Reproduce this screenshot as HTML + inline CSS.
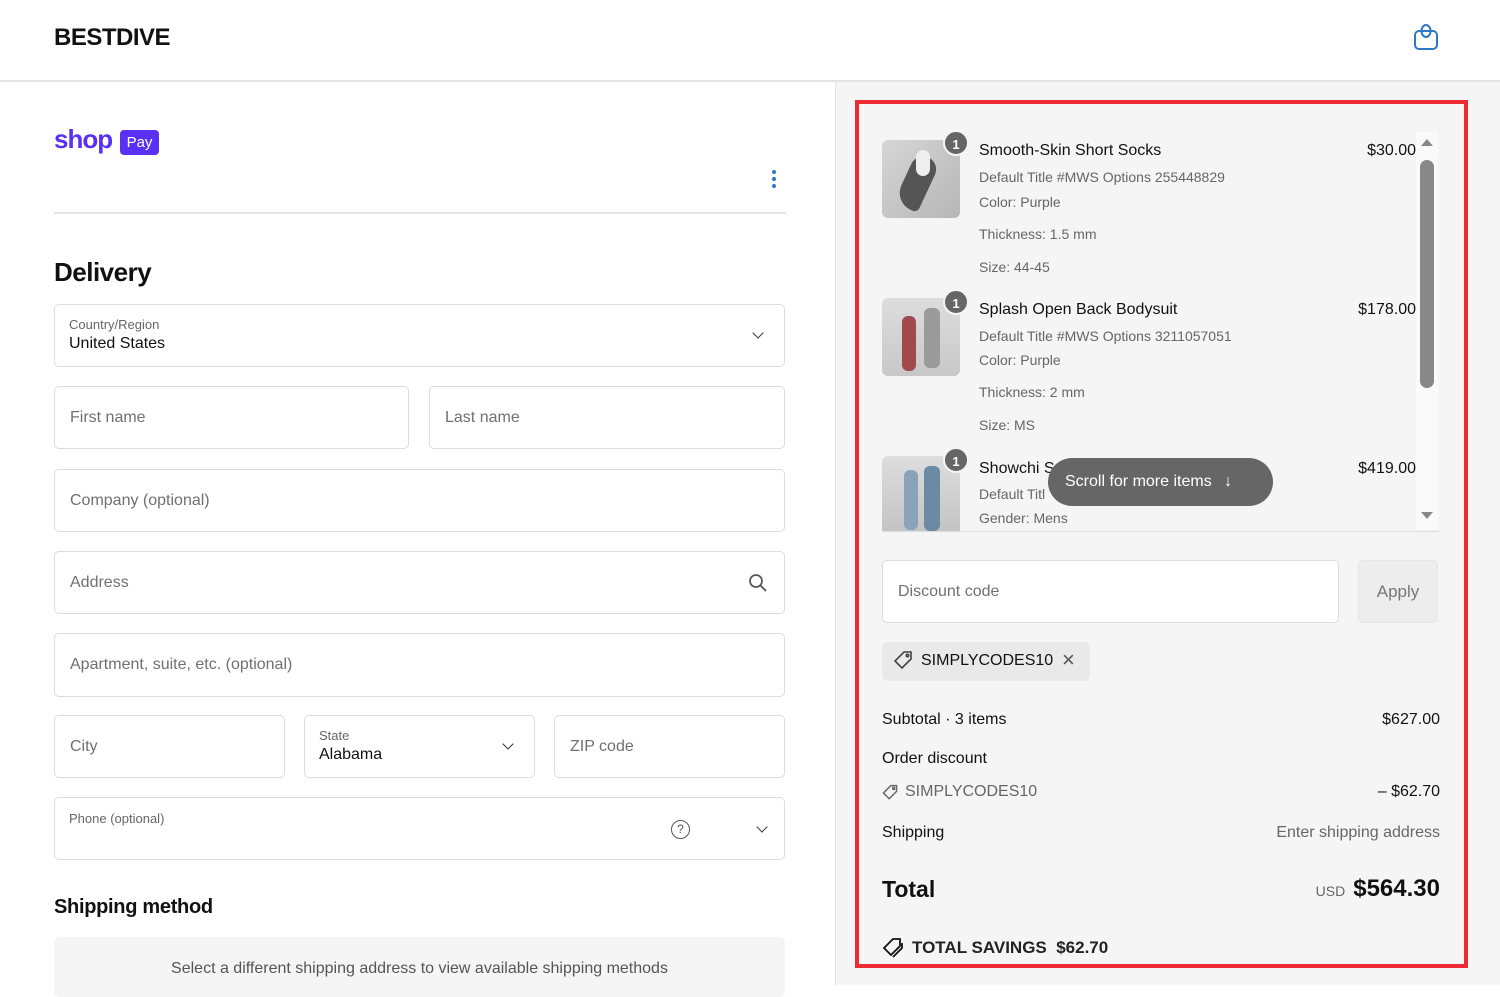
<!DOCTYPE html>
<html><head><meta charset="utf-8"><style>
*{margin:0;padding:0;box-sizing:border-box}
body{width:1500px;height:985px;overflow:hidden;background:#fff;font-family:"Liberation Sans",sans-serif;color:#111;position:relative}
.a{position:absolute}
.f{position:absolute;border:1px solid #dcdcdc;border-radius:5px;background:#fff}
.ph{position:absolute;left:15px;top:50%;transform:translateY(-50%);color:#707070;font-size:16px}
.lb{position:absolute;left:14px;top:12px;font-size:13px;color:#666}
.vl{position:absolute;left:14px;top:30px;font-size:16px;color:#111}
.chev{position:absolute;width:8px;height:8px;border-right:1.6px solid #333;border-bottom:1.6px solid #333;transform:rotate(45deg)}
.img{position:absolute;left:882px;width:78px;border-radius:6px;background:#c9c9c9;overflow:hidden}
.bd{position:absolute;width:26px;height:26px;border-radius:50%;background:#666;color:#fff;font-size:13px;font-weight:bold;text-align:center;line-height:26px;border:2px solid #f5f5f5}
.t{position:absolute;left:979px;font-size:16px;color:#111}
.s{position:absolute;left:979px;font-size:14px;color:#666}
.p{position:absolute;right:84px;font-size:16px;color:#111}
</style></head><body>
<div class="a" style="left:54px;top:24px;font-size:24px;font-weight:bold;letter-spacing:-0.5px">BESTDIVE</div>
<svg class="a" style="left:1411px;top:22px" width="30" height="30" viewBox="0 0 30 30" fill="none" stroke="#2f78c4" stroke-width="2"><rect x="4" y="9" width="22" height="18" rx="4"/><ellipse cx="15" cy="9" rx="4.5" ry="6"/></svg>
<div class="a" style="left:0;top:80px;width:1500px;height:2px;background:#e3e3e3"></div>
<div class="a" style="left:835px;top:82px;width:665px;height:903px;background:#f5f5f5;border-left:1px solid #e3e3e3"></div>

<div class="a" style="left:54px;top:124px;font-size:26px;font-weight:bold;color:#5a31f4;letter-spacing:-1px">shop</div>
<div class="a" style="left:120px;top:130px;width:39px;height:25px;background:#5a31f4;border-radius:4px;color:#fff;font-size:15px;text-align:center;line-height:25px">Pay</div>
<div class="a" style="left:772px;top:170px;width:4px;height:4px;border-radius:2px;background:#2f78c4;box-shadow:0 7px 0 #2f78c4,0 14px 0 #2f78c4"></div>
<div class="a" style="left:54px;top:212px;width:732px;height:2px;background:#e3e3e3"></div>
<div class="a" style="left:54px;top:257px;font-size:26px;font-weight:bold;letter-spacing:-0.5px">Delivery</div>

<div class="f" style="left:54px;top:304px;width:731px;height:63px"><div class="lb">Country/Region</div><div class="vl">United States</div><div class="chev" style="right:22px;top:24px"></div></div>
<div class="f" style="left:54px;top:386px;width:355px;height:63px"><div class="ph">First name</div></div>
<div class="f" style="left:429px;top:386px;width:356px;height:63px"><div class="ph">Last name</div></div>
<div class="f" style="left:54px;top:469px;width:731px;height:63px"><div class="ph">Company (optional)</div></div>
<div class="f" style="left:54px;top:551px;width:731px;height:63px"><div class="ph">Address</div>
<svg class="a" style="right:16px;top:21px" width="20" height="20" viewBox="0 0 20 20" fill="none" stroke="#555" stroke-width="1.7"><circle cx="8" cy="8" r="6"/><path d="M12.5 12.5L18 18"/></svg></div>
<div class="f" style="left:54px;top:633px;width:731px;height:64px"><div class="ph">Apartment, suite, etc. (optional)</div></div>
<div class="f" style="left:54px;top:715px;width:231px;height:63px"><div class="ph">City</div></div>
<div class="f" style="left:304px;top:715px;width:231px;height:63px"><div class="lb">State</div><div class="vl">Alabama</div><div class="chev" style="right:22px;top:24px"></div></div>
<div class="f" style="left:554px;top:715px;width:231px;height:63px"><div class="ph">ZIP code</div></div>
<div class="f" style="left:54px;top:797px;width:731px;height:63px"><div class="lb" style="top:13px">Phone (optional)</div>
<div class="a" style="left:616px;top:22px;width:19px;height:19px;border:1.5px solid #555;border-radius:50%;font-size:12px;text-align:center;line-height:16px;color:#555">?</div>
<div class="chev" style="right:18px;top:25px"></div></div>
<div class="a" style="left:54px;top:896px;font-size:20px;font-weight:bold;letter-spacing:-0.3px">Shipping method</div>
<div class="a" style="left:54px;top:937px;width:731px;height:60px;background:#f5f5f5;border-radius:6px;text-align:center;padding-top:23px;font-size:16px;color:#555">Select a different shipping address to view available shipping methods</div>

<!-- right -->
<div class="img" style="top:140px;height:78px;background:linear-gradient(135deg,#d6d6d6,#b6b6b6)"><div class="a" style="left:22px;top:15px;width:26px;height:55px;background:#555;border-radius:14px 14px 6px 20px;transform:rotate(25deg)"></div><div class="a" style="left:34px;top:10px;width:14px;height:26px;background:#eee;border-radius:8px"></div></div>
<div class="bd" style="left:943px;top:130px">1</div>
<div class="t" style="top:142px">Smooth-Skin Short Socks</div>
<div class="s" style="top:169px">Default Title #MWS Options 255448829</div>
<div class="s" style="top:194px">Color: Purple</div>
<div class="s" style="top:226px">Thickness: 1.5 mm</div>
<div class="s" style="top:259px">Size: 44-45</div>
<div class="p" style="top:142px">$30.00</div>

<div class="img" style="top:298px;height:78px;background:linear-gradient(#ddd,#c8c8c8)"><div class="a" style="left:20px;top:18px;width:14px;height:55px;background:#a04a50;border-radius:6px"></div><div class="a" style="left:42px;top:10px;width:16px;height:60px;background:#9a9a9a;border-radius:6px"></div></div>
<div class="bd" style="left:943px;top:289px">1</div>
<div class="t" style="top:301px">Splash Open Back Bodysuit</div>
<div class="s" style="top:328px">Default Title #MWS Options 3211057051</div>
<div class="s" style="top:352px">Color: Purple</div>
<div class="s" style="top:384px">Thickness: 2 mm</div>
<div class="s" style="top:417px">Size: MS</div>
<div class="p" style="top:301px">$178.00</div>

<div class="img" style="top:456px;height:75px;border-radius:6px 6px 0 0;background:linear-gradient(#ddd,#c4c4c4)"><div class="a" style="left:22px;top:14px;width:14px;height:60px;background:#8aa3b8;border-radius:6px"></div><div class="a" style="left:42px;top:10px;width:16px;height:65px;background:#6d8aa5;border-radius:6px"></div></div>
<div class="bd" style="left:943px;top:447px">1</div>
<div class="t" style="top:460px">Showchi S</div>
<div class="s" style="top:486px">Default Titl</div>
<div class="s" style="top:510px">Gender: Mens</div>
<div class="p" style="top:460px">$419.00</div>
<div class="a" style="left:1048px;top:458px;width:225px;height:48px;background:#666;border-radius:24px;color:#fff;font-size:16px;line-height:48px;padding-left:17px">Scroll for more items <span style="margin-left:8px">↓</span></div>

<div class="a" style="left:1416px;top:132px;width:22px;height:398px;background:#fafafa"></div>
<div class="a" style="left:1421px;top:139px;width:0;height:0;border-left:6px solid transparent;border-right:6px solid transparent;border-bottom:7px solid #888"></div>
<div class="a" style="left:1420px;top:160px;width:14px;height:228px;background:#888;border-radius:7px"></div>
<div class="a" style="left:1421px;top:512px;width:0;height:0;border-left:6px solid transparent;border-right:6px solid transparent;border-top:7px solid #888"></div>
<div class="a" style="left:882px;top:531px;width:557px;height:1px;background:#ddd"></div>

<div class="f" style="left:882px;top:560px;width:457px;height:63px"><div class="ph">Discount code</div></div>
<div class="a" style="left:1358px;top:560px;width:80px;height:63px;background:#ededed;border:1px solid #e6e6e6;border-radius:5px;text-align:center;line-height:61px;font-size:17px;color:#777">Apply</div>
<div class="a" style="left:882px;top:642px;width:208px;height:39px;background:#e9e9e9;border-radius:6px"></div>
<svg class="a" style="left:892px;top:650px" width="22" height="22" viewBox="0 0 22 22" fill="none" stroke="#444" stroke-width="1.6"><path d="M12 2h7v7L10 18 3 11z"/><circle cx="15.5" cy="5.5" r="1.2"/></svg>
<div class="a" style="left:921px;top:652px;font-size:16px;color:#111">SIMPLYCODES10</div>
<div class="a" style="left:1062px;top:647px;font-size:22px;color:#555">×</div>

<div class="a" style="left:882px;top:711px;font-size:16px">Subtotal · 3 items</div>
<div class="a" style="right:60px;top:711px;font-size:16px">$627.00</div>
<div class="a" style="left:882px;top:750px;font-size:16px">Order discount</div>
<svg class="a" style="left:881px;top:784px" width="18" height="18" viewBox="0 0 22 22" fill="none" stroke="#666" stroke-width="1.8"><path d="M12 2h7v7L10 18 3 11z"/><circle cx="15.5" cy="5.5" r="1.2"/></svg>
<div class="a" style="left:905px;top:783px;font-size:16px;color:#666">SIMPLYCODES10</div>
<div class="a" style="right:60px;top:783px;font-size:16px">– $62.70</div>
<div class="a" style="left:882px;top:824px;font-size:16px">Shipping</div>
<div class="a" style="right:60px;top:824px;font-size:16px;color:#666">Enter shipping address</div>
<div class="a" style="left:882px;top:876px;font-size:23px;font-weight:bold">Total</div>
<div class="a" style="right:60px;top:875px;font-size:24px;font-weight:bold"><span style="font-size:14px;font-weight:normal;color:#666;margin-right:8px">USD</span>$564.30</div>
<svg class="a" style="left:881px;top:937px" width="24" height="22" viewBox="0 0 24 22" fill="none" stroke="#111" stroke-width="1.8"><path d="M12 2h7v7L10 18 3 11z"/><path d="M21 6v5l-9 9"/></svg>
<div class="a" style="left:912px;top:938px;font-size:17px;font-weight:bold;color:#222">TOTAL SAVINGS&nbsp; $62.70</div>

<div class="a" style="left:855px;top:100px;width:613px;height:868px;border:4px solid #ee2b32"></div>
</body></html>
